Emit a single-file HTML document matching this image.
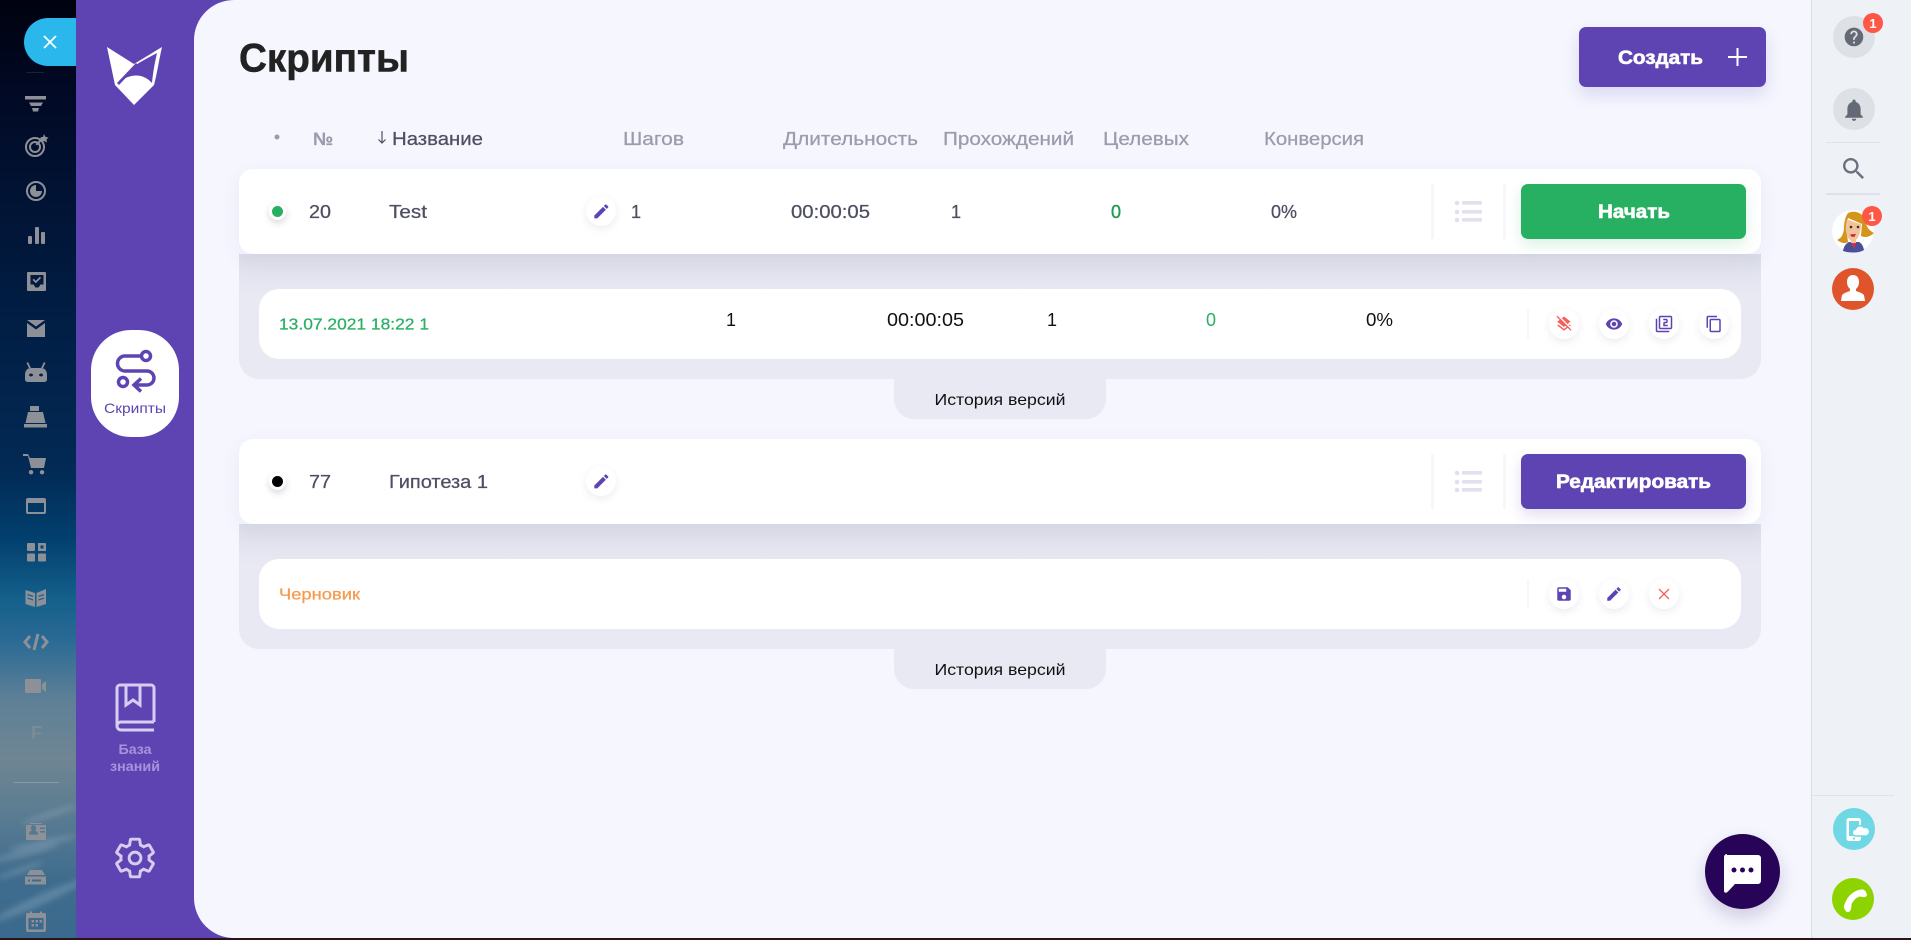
<!DOCTYPE html>
<html lang="ru"><head><meta charset="utf-8"><title>Скрипты</title>
<style>
html,body{margin:0;padding:0;width:1911px;height:940px;overflow:hidden;background:#2a1418}
.a{position:absolute}
#stage{position:relative;width:1911px;height:940px;overflow:hidden;font-family:"Liberation Sans",sans-serif}
#left{left:0;top:0;width:76px;height:938px;overflow:hidden;background:linear-gradient(180deg,#00020f 0,#010a26 100px,#011c42 300px,#022a55 470px,#02406f 540px,#15608c 600px,#2a6a94 640px,#5e8097 700px,#6f8593 760px,#5c7d92 810px,#3f6c8e 880px,#3a6a8e 938px)}
#left i{position:absolute;display:block;background:#dfe8ee;border-radius:50%;filter:blur(3px);opacity:.2}
#purple{left:76px;top:0;width:170px;height:938px;background:#5e44b2}
#main{left:194px;top:0;width:1617px;height:938px;background:#f5f6fe;border-radius:40px 0 0 40px}
#right{left:1811px;top:0;width:100px;height:938px;background:#eef1f5;border-left:1px solid #d8dde5;box-sizing:border-box}
#bot{left:0;top:938px;width:1911px;height:2px;background:#2a1418}
.row{left:239px;width:1522px;height:85px;background:#fff;border-radius:14px;box-shadow:0 6px 20px rgba(80,80,140,.07);z-index:2}
.panel{left:239px;width:1522px;height:125px;background:linear-gradient(180deg,#dcdde9 0,#e8e9f3 40px);border-radius:0 0 20px 20px;z-index:1}
.sub{left:259px;width:1482px;height:70px;background:#fff;border-radius:20px;z-index:2}
.tab{left:894px;width:212px;height:40px;background:#e8e9f3;border-radius:0 0 20px 20px;z-index:1}
.c{width:30px;height:30px;border-radius:50%;background:#fff;box-shadow:0 3px 8px rgba(80,80,140,.1);z-index:3}
.sep{background:#f6f7fb;z-index:3}
.btn{border-radius:7px;z-index:3}
.dot{width:11px;height:11px;border-radius:50%;border:3px solid #fff;box-shadow:0 3px 7px rgba(60,60,100,.2);z-index:3}
#ov{position:absolute;left:0;top:0;z-index:10}
text{font-family:"Liberation Sans",sans-serif}
</style></head><body>
<div id="stage">
<div class="a" id="left">
<i style="left:-10px;top:850px;width:70px;height:6px;transform:rotate(-14deg)"></i>
<i style="left:20px;top:812px;width:60px;height:5px;transform:rotate(-18deg)"></i>
<i style="left:8px;top:840px;width:70px;height:6px;transform:rotate(-12deg)"></i>
<i style="left:-10px;top:895px;width:100px;height:10px;transform:rotate(-24deg)"></i>
<i style="left:-5px;top:868px;width:50px;height:5px;transform:rotate(-20deg)"></i>
</div>
<div class="a" id="purple"></div>
<div class="a" id="main"></div>
<div class="a" id="right"></div>
<div class="a" id="bot"></div>

<div class="a" style="left:24px;top:18px;width:52px;height:48px;background:#2ab8ec;border-radius:24px 0 0 24px"></div>
<div class="a" style="left:91px;top:330px;width:88px;height:107px;background:#fff;border-radius:40px"></div>

<div class="a btn" style="left:1579px;top:27px;width:187px;height:60px;background:#5e44b2;box-shadow:0 8px 16px rgba(94,68,178,.16)"></div>

<div class="a panel" style="top:254px"></div>
<div class="a tab" style="top:379px"></div>
<div class="a row" style="top:169px"></div>
<div class="a dot" style="left:269px;top:203px;background:#28b062"></div>
<div class="a c" style="left:586px;top:196px"></div>
<div class="a sep" style="left:1431px;top:184px;width:3px;height:55px"></div>
<div class="a sep" style="left:1503px;top:184px;width:3px;height:55px"></div>
<div class="a btn" style="left:1521px;top:184px;width:225px;height:55px;background:#28b062;box-shadow:0 6px 14px rgba(40,176,98,.16)"></div>
<div class="a sub" style="top:289px"></div>
<div class="a sep" style="left:1527px;top:309px;width:2px;height:30px"></div>
<div class="a c" style="left:1549px;top:309px"></div>
<div class="a c" style="left:1599px;top:309px"></div>
<div class="a c" style="left:1649px;top:309px"></div>
<div class="a c" style="left:1699px;top:309px"></div>

<div class="a panel" style="top:524px"></div>
<div class="a tab" style="top:649px"></div>
<div class="a row" style="top:439px"></div>
<div class="a dot" style="left:269px;top:473px;background:#000"></div>
<div class="a c" style="left:586px;top:466px"></div>
<div class="a sep" style="left:1431px;top:454px;width:3px;height:55px"></div>
<div class="a sep" style="left:1503px;top:454px;width:3px;height:55px"></div>
<div class="a btn" style="left:1521px;top:454px;width:225px;height:55px;background:#5e44b2;box-shadow:0 6px 14px rgba(94,68,178,.18)"></div>
<div class="a sub" style="top:559px"></div>
<div class="a sep" style="left:1527px;top:579px;width:2px;height:30px"></div>
<div class="a c" style="left:1549px;top:579px"></div>
<div class="a c" style="left:1599px;top:579px"></div>
<div class="a c" style="left:1649px;top:579px"></div>

<div class="a" style="left:1705px;top:834px;width:75px;height:75px;border-radius:50%;background:#280458;box-shadow:0 8px 18px rgba(40,4,88,.18);z-index:5"></div>

<svg id="ov" width="1911" height="940" viewBox="0 0 1911 940" xmlns="http://www.w3.org/2000/svg">
<defs>
<path id="pen" d="M3 17.25V21h3.75L17.81 9.94l-3.75-3.75L3 17.25zM20.71 7.04c.39-.39.39-1.02 0-1.41l-2.34-2.34c-.39-.39-1.02-.39-1.41 0l-1.83 1.83 3.75 3.75 1.83-1.83z"/>
<g id="list" fill="#e0e0ee"><circle cx="1457" cy="203" r="2.300"/><circle cx="1457" cy="212" r="2.300"/><circle cx="1457" cy="220" r="2.300"/><rect x="1462" y="201" width="20" height="3.600" rx="1"/><rect x="1462" y="210" width="20" height="3.600" rx="1"/><rect x="1462" y="218" width="20" height="3.600" rx="1"/></g>
</defs>

<!-- left rail -->
<path d="M44 36l12 12M56 36L44 48" stroke="#fff" stroke-width="1.800" fill="none"/>
<rect x="26" y="72" width="18" height="1" fill="#1a2138"/>
<g fill="#8d9097">
<rect x="25" y="96" width="21" height="3.500"/><path d="M29 102.500h14l-2 3.500H31z"/><path d="M32 108h7l-1 3.500h-5z"/>
<path d="M41 137l2 0 1-3 1.500 3 3 .5-2 2 .5 3-3-1.500-3 .5-4 4-1.500-1.500 4-4z"/>
<path d="M36 185v6h6a6 6 0 1 1-6-6z"/>
<rect x="28" y="236" width="4" height="8" rx="1"/><rect x="35" y="227" width="4" height="17" rx="1"/><rect x="41" y="232" width="4" height="12" rx="1"/>
<path fill-rule="evenodd" d="M28 272h17a1 1 0 0 1 1 1v17a1 1 0 0 1-1 1H28a1 1 0 0 1-1-1v-17a1 1 0 0 1 1-1zm2.500 3v9.500h3l2 3h3l2-3h3V275z"/>
<path d="M32.500 280l1.300-1.300 2 2 4-4 1.300 1.300-5.300 5.300z"/>
<path d="M27 320h18l-9 6.500zM27 323l9 6.500 9-6.500v14H27z"/>
<path fill-rule="evenodd" d="M31 368h10c4 0 6 3 6 7v4c0 2-1 3-3 3H28c-2 0-3-1-3-3v-4c0-4 2-7 6-7zm0 5.500a2 1.500 0 1 0 .1 0zm10 0a2 1.500 0 1 0 .1 0z" />
<path d="M28 362l3 6h-2l-2.500-5zM44 362l-3 6h2l2.500-5z"/>
<path fill-rule="evenodd" d="M30 406h9v5h-9zM28 412h15l2.500 11h-20zM24 424h23v3.500H24z"/>
<path d="M23 454h5l2 4h16l-2 10H31l-3-12h-5zM31 470a2.200 2.200 0 1 0 .1 0zM42 470a2.200 2.200 0 1 0 .1 0z"/>
<path fill-rule="evenodd" d="M28 498h16a2 2 0 0 1 2 2v12a2 2 0 0 1-2 2H28a2 2 0 0 1-2-2v-12a2 2 0 0 1 2-2zm0 5v9h16v-9z"/>
<rect x="27" y="543" width="8" height="8" rx="1"/><path fill-rule="evenodd" d="M38 543h7a1 1 0 0 1 1 1v7H38zm2.500 2.500v3h3v-3z"/><rect x="27" y="553.500" width="8" height="8" rx="1"/><rect x="38" y="553.500" width="8" height="8" rx="1"/>
<path fill-rule="evenodd" d="M25.500 590l9.500 3v14l-9.500-3zm2 4v1.200l5.500 1.800v-1.200zm0 3.500v1.200l5.500 1.800v-1.200z"/>
<path fill-rule="evenodd" d="M46 589l-9.500 4v14l9.500-3zm-2 5v1.200l-5.500 1.800v-1.200zm0 3.500v1.200l-5.500 1.800v-1.200z"/>
<path d="M26 679h14a1 1 0 0 1 1 1v12a1 1 0 0 1-1 1H26a1 1 0 0 1-1-1v-12a1 1 0 0 1 1-1zM42 684l4-3v11l-4-3z"/>
<path fill-rule="evenodd" d="M26 825h20v15H26zM30 823h12v1H30zm-1 11.500h9c0-3-2-3.500-3-4a2.700 3 0 1 0-3 0c-1 .5-3 1-3 4zm11-7v1.500h5v-1.500zm0 3.500v1.500h5V831z"/>
<path fill-rule="evenodd" d="M30 870h12l3 5H27zM25 876.500h21v8H25zm3 3v2h2v-2zm4 0v2h9v-2z"/>
<path fill-rule="evenodd" d="M28 913h2v-1.500h2V913h8v-1.500h2V913h2a2 2 0 0 1 2 2v15a2 2 0 0 1-2 2H28a2 2 0 0 1-2-2v-15a2 2 0 0 1 2-2zm.5 5v11.500h15V918zm3 2h2.500v2.500h-2.500zm4 0h2.500v2.500H35.500zm4 0h2.500v2.500h-2.500zm-8 4h2.500v2.500h-2.500zm4 0h2.500v2.500H35.500z"/>
</g>
<g fill="none" stroke="#8d9097">
<circle cx="35" cy="147" r="9" stroke-width="2"/><circle cx="35" cy="147" r="5" stroke-width="2"/>
<circle cx="36" cy="191" r="9" stroke-width="2"/>
<path d="M30 636l-5 6 5 6M42 636l5 6-5 6M38 634l-4 16" stroke-width="3"/>
</g>
<text x="31" y="739" font-size="18" font-weight="700" fill="#7b8c98">F</text>
<rect x="14" y="782" width="45" height="1" fill="#fff" opacity=".2"/>

<!-- logo -->
<path fill="#fff" d="M107 47L134 64 162 47C159 60 157 74 154 85L134 105 115 85Z"/>
<path fill="#5e44b2" d="M157 53C144 60 131 66 125 76L122 80C130 75 142 72 152 83C153 72 155 62 157 53Z"/>
<path fill="#5e44b2" d="M136 63L117 83 119 85 138 65Z"/>

<!-- scripts nav -->
<g fill="none" stroke="#5e44b2" stroke-width="3.500"><circle cx="146" cy="356" r="4.500"/><circle cx="123" cy="382" r="4.500"/><path d="M141 356H125a7.500 7.500 0 0 0 0 15H147a7 7 0 0 1 0 14H135M141 378.500l-7 6.500 7 6.500"/></g>
<text x="104" y="413" font-size="14" fill="#5e44b2" textLength="62" lengthAdjust="spacingAndGlyphs">Скрипты</text>

<!-- knowledge base -->
<g fill="none" stroke="#d6cdf1" stroke-width="3"><path d="M154 722V688a3 3 0 0 0-3-3H120a3 3 0 0 0-3 3v38a4 4 0 0 0 4 4h33"/><path d="M117 726a4 4 0 0 1 4-4h33"/><path d="M126 685v20l7-5 7 5v-20"/></g>
<text x="135" y="754" font-size="14" font-weight="700" fill="#a594dc" text-anchor="middle" textLength="33" lengthAdjust="spacingAndGlyphs">База</text>
<text x="135" y="771" font-size="14" font-weight="700" fill="#a594dc" text-anchor="middle" textLength="50" lengthAdjust="spacingAndGlyphs">знаний</text>
<g transform="translate(111.500 834.500) scale(1.960)"><path fill="none" stroke="#d6cdf1" stroke-width="1.500" d="M19.140 12.940c.04-.3.06-.61.06-.94 0-.32-.02-.64-.07-.94l2.030-1.580c.18-.14.23-.41.12-.61l-1.920-3.320c-.12-.22-.37-.29-.59-.22l-2.390.96c-.5-.38-1.030-.7-1.620-.94l-.36-2.540c-.04-.24-.24-.41-.48-.41h-3.840c-.24 0-.43.17-.47.41l-.36 2.540c-.59.24-1.130.57-1.620.94l-2.390-.96c-.22-.08-.47 0-.59.22L2.740 8.870c-.12.21-.08.47.12.61l2.030 1.580c-.05.3-.09.63-.09.94s.02.64.07.94l-2.030 1.580c-.18.14-.23.41-.12.61l1.920 3.320c.12.22.37.29.59.22l2.390-.96c.5.38 1.030.7 1.620.94l.36 2.540c.05.24.24.41.48.41h3.840c.24 0 .44-.17.47-.41l.36-2.540c.59-.24 1.130-.56 1.620-.94l2.390.96c.22.08.47 0 .59-.22l1.920-3.320c.12-.22.07-.47-.12-.61zM12 15a3 3 0 1 1 0-6 3 3 0 0 1 0 6z"/></g>

<!-- heading -->
<text x="239" y="71.500" font-size="40" font-weight="700" fill="#222" stroke="#222" stroke-width=".5" textLength="170" lengthAdjust="spacingAndGlyphs">Скрипты</text>
<circle cx="277" cy="137" r="2.500" fill="#9a9bac"/>
<g font-size="18" fill="#9a9bac" stroke="#9a9bac" stroke-width=".25">
<text x="313" y="145" font-weight="700" textLength="20" lengthAdjust="spacingAndGlyphs">№</text>
<text x="623" y="145" textLength="61" lengthAdjust="spacingAndGlyphs">Шагов</text>
<text x="783" y="145" textLength="135" lengthAdjust="spacingAndGlyphs">Длительность</text>
<text x="943" y="145" textLength="131" lengthAdjust="spacingAndGlyphs">Прохождений</text>
<text x="1103" y="145" textLength="86" lengthAdjust="spacingAndGlyphs">Целевых</text>
<text x="1264" y="145" textLength="100" lengthAdjust="spacingAndGlyphs">Конверсия</text>
</g>
<path d="M382 131v12M378.500 139.500l3.500 3.500 3.500-3.500" fill="none" stroke="#4e4f63" stroke-width="1.200"/>
<text x="392" y="145" font-size="18" fill="#4e4f63" stroke="#4e4f63" stroke-width=".25" textLength="91" lengthAdjust="spacingAndGlyphs">Название</text>

<!-- row 1 -->
<g font-size="18" fill="#4e4f63" stroke="#4e4f63" stroke-width=".25">
<text x="309" y="218" textLength="22" lengthAdjust="spacingAndGlyphs">20</text>
<text x="389" y="218" textLength="38" lengthAdjust="spacingAndGlyphs">Test</text>
<text x="631" y="218">1</text>
<text x="791" y="218" textLength="79" lengthAdjust="spacingAndGlyphs">00:00:05</text>
<text x="951" y="218">1</text>
<text x="1111" y="218" fill="#1f9c55" stroke="#1f9c55" stroke-width=".4">0</text>
<text x="1271" y="218" textLength="26" lengthAdjust="spacingAndGlyphs">0%</text>
</g>
<use href="#pen" transform="translate(592 202) scale(.78)" fill="#5e44b2"/>
<use href="#list"/>
<text x="1598" y="218" font-size="19" font-weight="700" fill="#fff" stroke="#fff" stroke-width=".6" textLength="72" lengthAdjust="spacingAndGlyphs">Начать</text>

<!-- sub row 1 -->
<text x="279" y="329.500" font-size="16" fill="#28b062" stroke="#28b062" stroke-width=".25" textLength="150" lengthAdjust="spacingAndGlyphs">13.07.2021 18:22 1</text>
<g font-size="18" fill="#111">
<text x="726" y="326">1</text>
<text x="887" y="326" textLength="77" lengthAdjust="spacingAndGlyphs">00:00:05</text>
<text x="1047" y="326">1</text>
<text x="1206" y="326" fill="#28b062">0</text>
<text x="1366" y="326" textLength="27" lengthAdjust="spacingAndGlyphs">0%</text>
</g>
<path transform="translate(1555 315) scale(.75)" fill="#f4605a" d="M19.810 14.990l1.190-.92-1.430-1.430-1.190.92 1.430 1.430zm-.45-5.260L21 9l-9-7-2.910 2.270 7.870 7.880 2.400-2.420zM3.270 1L2 2.270l4.220 4.220L3 9l1.630 1.270L12 16l2.100-1.630 1.430 1.430L12 18.540l-7.370-5.730L3 14.070l9 7 4.950-3.850L20.730 21 22 19.730 3.270 1z"/>
<path transform="translate(1605 315) scale(.75)" fill="#5e44b2" d="M12 4.500C7 4.500 2.730 7.610 1 12c1.730 4.390 6 7.500 11 7.500s9.270-3.110 11-7.500c-1.730-4.390-6-7.500-11-7.500zM12 17c-2.760 0-5-2.240-5-5s2.240-5 5-5 5 2.240 5 5-2.240 5-5 5zm0-8c-1.660 0-3 1.340-3 3s1.340 3 3 3 3-1.340 3-3-1.340-3-3-3z"/>
<path transform="translate(1655 315) scale(.75)" fill="#5e44b2" d="M3 5H1v16c0 1.100.9 2 2 2h16v-2H3V5zm18-4H7c-1.100 0-2 .9-2 2v14c0 1.100.9 2 2 2h14c1.100 0 2-.9 2-2V3c0-1.100-.9-2-2-2zm0 16H7V3h14v14zm-4-4h-4v-2h2c1.100 0 2-.89 2-2V7c0-1.110-.9-2-2-2h-4v2h4v2h-2c-1.100 0-2 .89-2 2v4h6v-2z"/>
<path transform="translate(1705 315) scale(.75)" fill="#5e44b2" d="M16 1H4c-1.100 0-2 .9-2 2v14h2V3h12V1zm3 4H8c-1.100 0-2 .9-2 2v14c0 1.100.9 2 2 2h11c1.100 0 2-.9 2-2V7c0-1.100-.9-2-2-2zm0 16H8V7h11v14z"/>
<text x="1000" y="405" font-size="16" fill="#111" text-anchor="middle" textLength="131" lengthAdjust="spacingAndGlyphs">История версий</text>

<!-- row 2 -->
<g font-size="18" fill="#4e4f63" stroke="#4e4f63" stroke-width=".25">
<text x="309" y="488" textLength="22" lengthAdjust="spacingAndGlyphs">77</text>
<text x="389" y="488" textLength="99" lengthAdjust="spacingAndGlyphs">Гипотеза 1</text>
</g>
<use href="#pen" transform="translate(592 472) scale(.78)" fill="#5e44b2"/>
<use href="#list" transform="translate(0 270)"/>
<text x="1556" y="488" font-size="19" font-weight="700" fill="#fff" stroke="#fff" stroke-width=".6" textLength="155" lengthAdjust="spacingAndGlyphs">Редактировать</text>

<!-- sub row 2 -->
<text x="279" y="599.500" font-size="16" fill="#f79a4f" stroke="#f79a4f" stroke-width=".25" textLength="81" lengthAdjust="spacingAndGlyphs">Черновик</text>
<path transform="translate(1555 585) scale(.75)" fill="#5e44b2" d="M17 3H5c-1.110 0-2 .9-2 2v14c0 1.100.89 2 2 2h14c1.100 0 2-.9 2-2V7l-4-4zm-5 16c-1.660 0-3-1.340-3-3s1.340-3 3-3 3 1.340 3 3-1.340 3-3 3zm3-10H5V5h10v4z"/>
<use href="#pen" transform="translate(1605 585) scale(.75)" fill="#5e44b2"/>
<path d="M1659 589l10 10M1669 589l-10 10" stroke="#f4605a" stroke-width="1.300" fill="none"/>
<text x="1000" y="675" font-size="16" fill="#111" text-anchor="middle" textLength="131" lengthAdjust="spacingAndGlyphs">История версий</text>

<!-- create -->
<text x="1618" y="64" font-size="19" font-weight="700" fill="#fff" stroke="#fff" stroke-width=".6" textLength="85" lengthAdjust="spacingAndGlyphs">Создать</text>
<path d="M1737.500 48v18M1728 57h19" stroke="#fff" stroke-width="2" fill="none"/>

<!-- chat -->
<path fill="#fff" d="M1727 855h31a3 3 0 0 1 3 3v23a3 3 0 0 1-3 3h-23l-7 7.500c-2 2-4 1.500-4-1v-33.500a3 3 0 0 1 3-3z"/>
<g fill="#280458"><circle cx="1734" cy="870" r="2.500"/><circle cx="1742.500" cy="870" r="2.500"/><circle cx="1751" cy="870" r="2.500"/></g>

<!-- right rail -->
<circle cx="1854" cy="37" r="21" fill="#dde0e4"/>
<path transform="translate(1842.800 25.800) scale(.93)" fill="#636a76" d="M12 2C6.480 2 2 6.480 2 12s4.480 10 10 10 10-4.480 10-10S17.520 2 12 2zm1 17h-2v-2h2v2zm2.070-7.750l-.9.92C13.450 12.900 13 13.500 13 15h-2v-.5c0-1.100.45-2.100 1.170-2.830l1.240-1.260c.37-.36.59-.86.59-1.410 0-1.100-.9-2-2-2s-2 .9-2 2H8c0-2.210 1.790-4 4-4s4 1.790 4 4c0 .88-.36 1.680-.93 2.250z"/>
<circle cx="1873" cy="23" r="10" fill="#ff5745"/>
<text x="1873" y="28" font-size="13" font-weight="700" fill="#fff" text-anchor="middle">1</text>
<circle cx="1854" cy="109" r="21" fill="#dde0e4"/>
<path transform="translate(1840.800 96.800) scale(1.100)" fill="#636a76" d="M12 22c1.100 0 2-.9 2-2h-4c0 1.100.89 2 2 2zm6-6v-5c0-3.070-1.640-5.640-4.500-6.320V4c0-.83-.67-1.500-1.500-1.500s-1.500.67-1.500 1.500v.68C7.630 5.360 6 7.920 6 11v5l-2 2v1h16v-1l-2-2z"/>
<rect x="1826" y="142" width="54" height="1" fill="#dfe3e8"/>
<path transform="translate(1839.400 154.400) scale(1.200)" fill="#6a717d" d="M15.500 14h-.79l-.28-.27C15.410 12.590 16 11.110 16 9.500 16 5.910 13.090 3 9.500 3S3 5.910 3 9.500 5.910 16 9.500 16c1.610 0 3.090-.59 4.230-1.570l.27.28v.79l5 4.990L20.490 19l-4.990-5zm-6 0C7.010 14 5 11.990 5 9.500S7.010 5 9.500 5 14 7.010 14 9.500 11.990 14 9.500 14z"/>
<rect x="1826" y="193" width="54" height="2" fill="#dfe3e8"/>

<circle cx="1853" cy="231" r="21" fill="#fff"/>
<path fill="#4b4f9a" d="M1843 251c1-6 4-8 6-9h10c2 1 4 3 5 8-3 2-7 2.500-11 2.500-4 0-7-.5-10-1.500z"/>
<path fill="#d92f3e" d="M1851 243h5l-2 6z"/>
<path fill="#d3951a" d="M1848 213c9-4 17 2 18 10 1 5 4 8 8 10-4 4-9 5-13 3l1-12-14-6c-2 5-1 10-1 14 0 5 1 8 1 10-3 2-7 1-11-2 4-2 6-4 7-11 0-6 1-12 4-16z"/>
<path fill="#f0c39c" d="M1847 219c4 2 10 4 14 5 0 8-3 17-8 17-5 0-8-8-7-16z"/>
<rect x="1851" y="238" width="5" height="5" fill="#f0c39c"/>
<path fill="#c8222e" d="M1850 234.500l6-.5-1.500 2.800h-3z"/>
<circle cx="1851" cy="227" r="1.300" fill="#4a2c1c"/><circle cx="1858" cy="227" r="1.300" fill="#4a2c1c"/>
<circle cx="1872" cy="216" r="10" fill="#ff5745"/>
<text x="1872" y="221" font-size="13" font-weight="700" fill="#fff" text-anchor="middle">1</text>

<circle cx="1853" cy="289" r="21" fill="#e0542c"/>
<path fill="#fff" d="M1853 275c4 0 6 3 6 7 0 3-1 5-3 7v2c3 1 6 2 8 4l1 6h-24l1-6c2-2 5-3 8-4v-2c-2-2-3-4-3-7 0-4 2-7 6-7z"/>

<rect x="1813" y="795" width="81" height="1" fill="#dfe3e8"/>
<circle cx="1854" cy="829" r="21" fill="#70d7e4"/>
<rect x="1846.500" y="818" width="14.500" height="23" rx="2.500" fill="#fff"/>
<rect x="1849" y="821" width="10" height="15" fill="#70d7e4"/>
<circle cx="1854" cy="838.500" r="1.100" fill="#70d7e4"/>
<path fill="#fff" stroke="#70d7e4" stroke-width="1.500" d="M1856 836a3.500 3.500 0 0 1-.5-7 5 5 0 0 1 8.500-1.500 4 4 0 0 1 2.500 8.500z"/>
<circle cx="1853" cy="899" r="21" fill="#8dd300"/>
<path fill="#fff" d="M1866 892c-1-2-3-3-5-2.500-8 1-15 8-17 17 0 2 1 4.500 3 5.500 2 .5 3.500-1 4-3l.5-3c-.3-1.300 0-2.300 1-3.500 2-3 4-5 7-6l3 .5c2 .5 4 0 4.500-2z"/>
</svg>
</div>
</body></html>
